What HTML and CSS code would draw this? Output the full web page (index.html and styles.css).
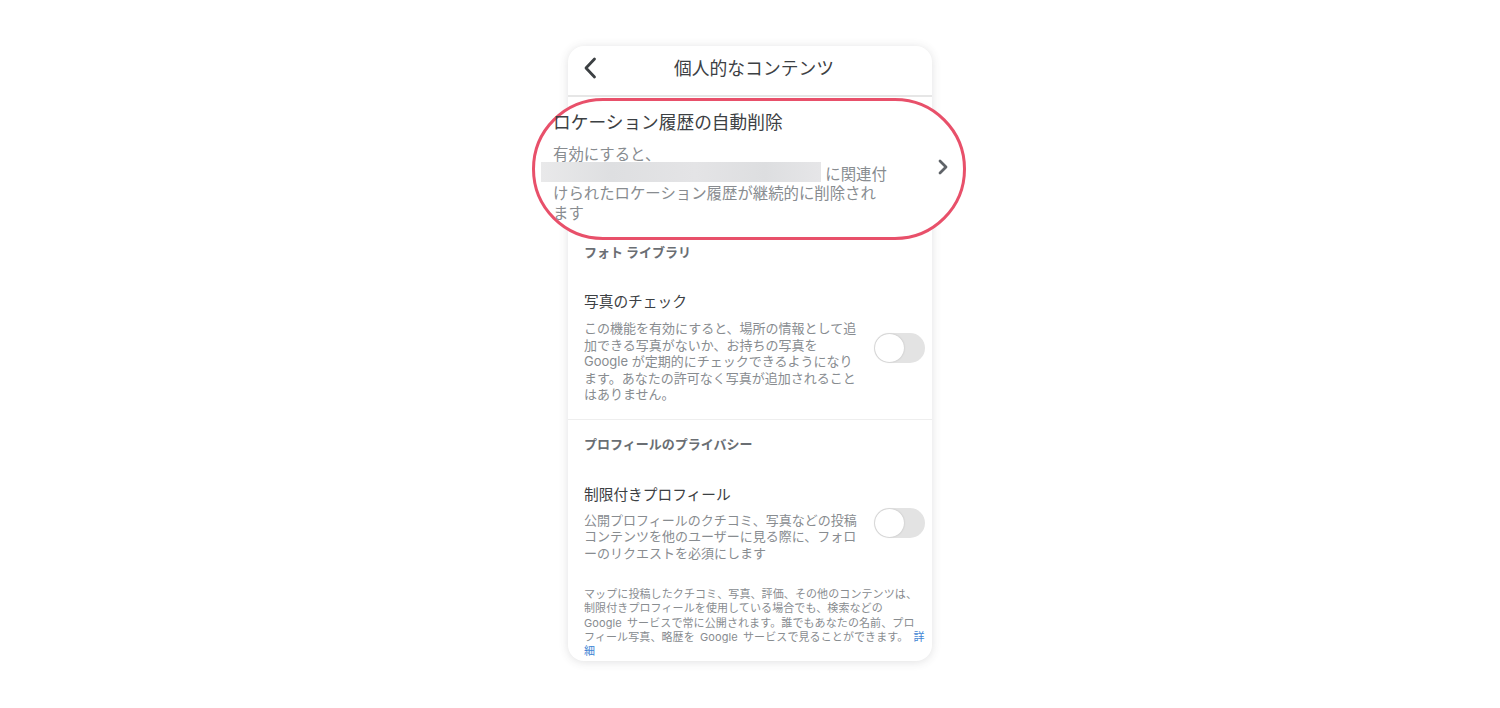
FILE: index.html
```html
<!DOCTYPE html>
<html lang="ja">
<head>
<meta charset="utf-8">
<title>個人的なコンテンツ</title>
<link rel="stylesheet" href="styles.css">
</head>
<body>
<main class="card">
  <header class="topbar">
    <svg class="back" viewBox="0 0 14 22" width="14" height="22"><path d="M11.5 2 L3 11 L11.5 20" fill="none" stroke="#3c4043" stroke-width="2.8" stroke-linecap="round" stroke-linejoin="round"/></svg>
    <h1 class="topbar-title">個人的なコンテンツ</h1>
  </header>
  <div class="spacer"></div>
  <section class="section first">
    <h2 class="section-head">フォト ライブラリ</h2>
    <div class="row">
      <div class="row-text">
        <div class="row-title">写真のチェック</div>
        <p class="row-desc">この機能を有効にすると、場所の情報として追<br>加できる写真がないか、お持ちの写真を<br>Google が定期的にチェックできるようになり<br>ます。あなたの許可なく写真が追加されること<br>はありません。</p>
      </div>
      <span class="toggle"><span class="knob"></span></span>
    </div>
  </section>
  <section class="section second">
    <h2 class="section-head">プロフィールのプライバシー</h2>
    <div class="row">
      <div class="row-text">
        <div class="row-title">制限付きプロフィール</div>
        <p class="row-desc">公開プロフィールのクチコミ、写真などの投稿<br>コンテンツを他のユーザーに見る際に、フォロ<br>ーのリクエストを必須にします</p>
      </div>
      <span class="toggle"><span class="knob"></span></span>
    </div>
    <p class="note">マップに投稿したクチコミ、写真、評価、その他のコンテンツは、<br>制限付きプロフィールを使用している場合でも、検索などの<br>Google サービスで常に公開されます。誰でもあなたの名前、プロ<br>フィール写真、略歴を Google サービスで見ることができます。 <a class="more" href="#">詳<br>細</a></p>
  </section>
</main>
<aside class="callout">
  <div class="callout-text">
    <div class="callout-title">ロケーション履歴の自動削除</div>
    <p class="callout-desc">有効にすると、<br><span class="redact"></span> に関連付<br>けられたロケーション履歴が継続的に削除され<br>ます</p>
  </div>
  <svg class="chev" viewBox="0 0 10 16" width="10" height="16"><path d="M2 2 L8 8 L2 14" fill="none" stroke="#5f6368" stroke-width="2.8" stroke-linecap="round" stroke-linejoin="round"/></svg>
</aside>
</body>
</html>
```
FILE: styles.css
```css
* { box-sizing: border-box; }
html, body { margin: 0; padding: 0; }
body {
  background: #fff;
  height: 708px;
  overflow: hidden;
  position: relative;
  padding-top: 46px;
}
h1, h2, p { margin: 0; font-weight: normal; }
.card {
  width: 364px;
  height: 615px;
  margin: 0 auto;
  background: #fff;
  border-radius: 16px;
  box-shadow: 0 1px 10px rgba(60, 64, 67, 0.16);
  overflow: hidden;
  font-family: "Inter", "Noto Sans CJK JP", sans-serif;
}
.topbar {
  height: 51px;
  display: flex;
  align-items: center;
  justify-content: center;
  position: relative;
  border-bottom: 2px solid #e6e6e6;
}
.back { position: absolute; left: 15px; top: 11px; }
.topbar-title { font-size: 17.8px; color: #3c4043; line-height: 44px; padding: 0 0 4px 8px; }
.spacer { height: 145px; }
.section-head {
  font-size: 13px;
  font-weight: 700;
  color: #6a6e73;
  line-height: 20px;
  padding-left: 16px;
}
.row {
  display: flex;
  align-items: center;
  gap: 16px;
  padding: 0 7px 0 16px;
}
.first .row { margin-top: 28px; }
.second .row { margin-top: 29px; }
.row-text { width: 274px; flex: none; }
.row-title { font-size: 14.7px; line-height: 24px; color: #3c4043; }
.row-desc { font-size: 13px; line-height: 16.5px; color: #888c90; margin-top: 6px; }
.second .row-desc { margin-top: 5px; }
.toggle {
  width: 51px;
  height: 30px;
  margin-top: 3px;
  border-radius: 15px;
  background: #e3e3e3;
  flex: none;
  display: block;
  padding: 1px;
}
.knob {
  display: block;
  width: 29px;
  height: 28px;
  border-radius: 50%;
  background: #fff;
  box-shadow: 0 0 2px rgba(0, 0, 0, 0.2);
}
.section.first { padding-bottom: 16px; border-bottom: 1px solid #eeeeee; }
.section.second { padding-top: 14px; }
.note {
  font-size: 11px;
  line-height: 14.3px;
  letter-spacing: 0.1px;
  word-spacing: 2px;
  color: #888c90;
  padding: 0 8px 0 16px;
  margin-top: 26px;
  white-space: nowrap;
}
.more { color: #4285d4; text-decoration: none; }
.callout {
  position: absolute;
  left: 532px;
  top: 98px;
  width: 434px;
  height: 142px;
  border: 3px solid #e8506a;
  border-radius: 71px;
  background: #fff;
  font-family: "Inter", "Noto Sans CJK JP", sans-serif;
}
.callout-text { position: absolute; left: 18px; top: 9px; white-space: nowrap; }
.callout-title { font-size: 17.7px; line-height: 26px; color: #3c4043; }
.callout-desc { font-size: 15.4px; line-height: 19.6px; color: #888c90; margin-top: 9px; }
.redact {
  display: inline-block;
  width: 280px;
  height: 20px;
  margin: -8px 0 -8px -12px;
  background: linear-gradient(90deg, #e9e9ea 0, #dedfe1 25%, #e4e4e6 55%, #dddee0 80%, #e6e6e8 100%);
  vertical-align: 5.5px;
}
.chev { position: absolute; left: 403px; top: 58px; }
```
